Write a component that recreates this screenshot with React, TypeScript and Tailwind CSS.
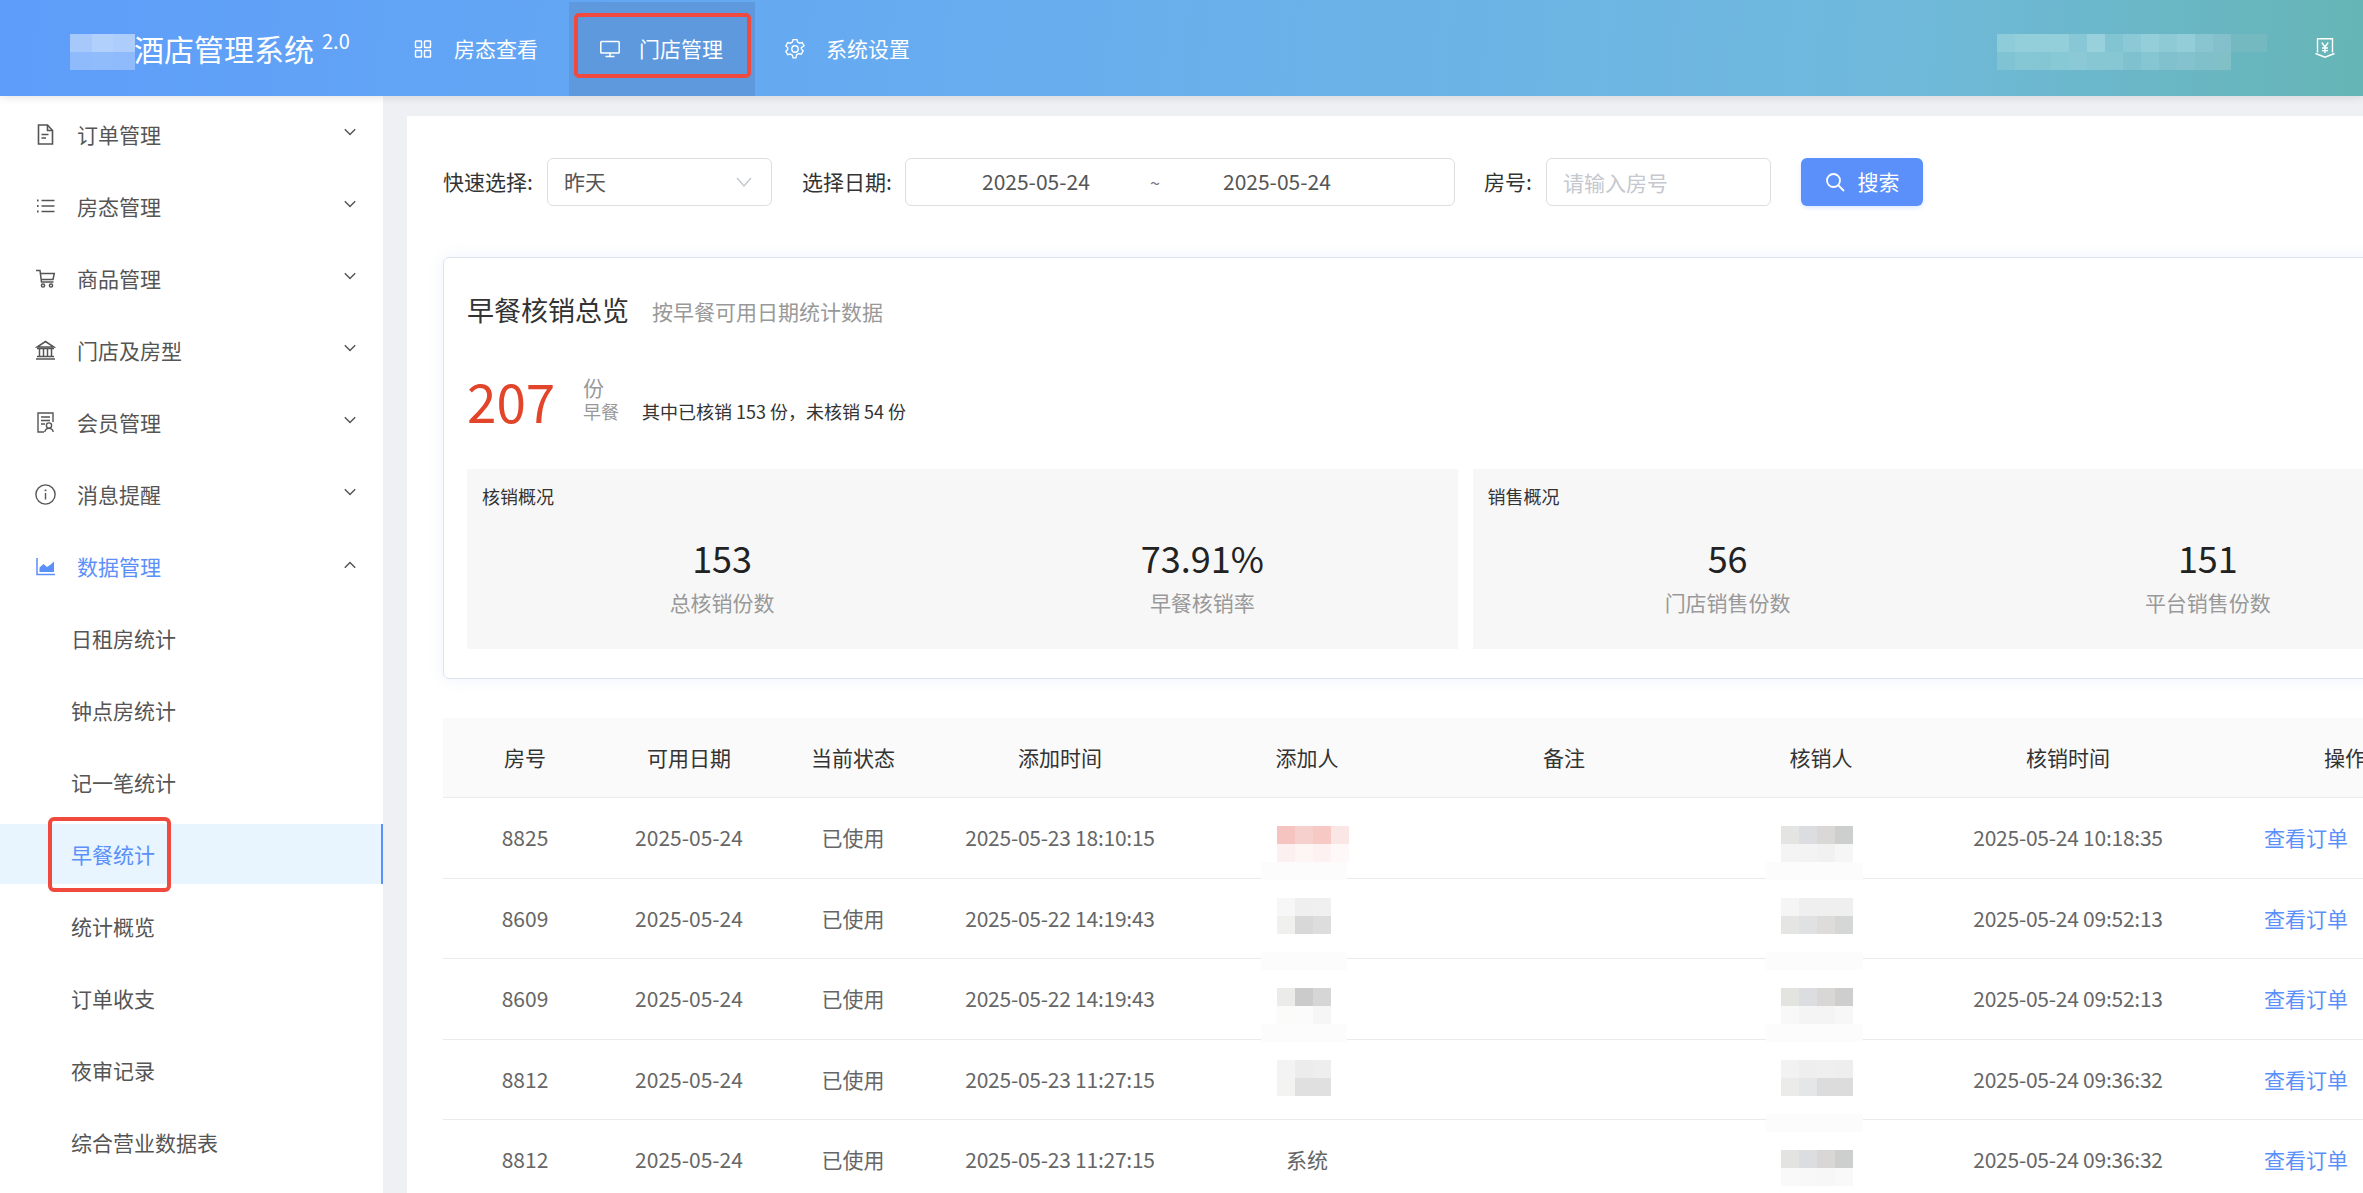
import React from "react";

const ICON = "fill-none stroke-current";

const DocIcon = () => (
  <svg width="21" height="21" viewBox="0 0 21 21" className={ICON} strokeWidth="1.6">
    <path d="M3.5 1h9l5 5.5V20h-14z" />
    <path d="M12.5 1v5.5h5" />
    <path d="M6.5 10.5h7M6.5 14h4.5" />
  </svg>
);
const ListIcon = () => (
  <svg width="21" height="21" viewBox="0 0 21 21" className={ICON} strokeWidth="1.4">
    <path d="M6.5 4.5h13M6.5 10h13M6.5 15.5h13" />
    <path d="M2 4.5h1.6M2 10h1.6M2 15.5h1.6" strokeWidth="2" />
  </svg>
);
const CartIcon = () => (
  <svg width="21" height="21" viewBox="0 0 21 21" className={ICON} strokeWidth="1.5">
    <path d="M1 2.5h4l1.5 11.5h12" />
    <path d="M5.3 5.5h14l-1.3 6H6.2" />
    <circle cx="8" cy="17.5" r="1.6" />
    <circle cx="16" cy="17.5" r="1.6" />
  </svg>
);
const BankIcon = () => (
  <svg width="21" height="21" viewBox="0 0 21 21" className={ICON} strokeWidth="1.5">
    <path d="M10.5 1.5 2 7h17z" />
    <path d="M2 8.5h17M4.5 9v7M8.5 9v7M12.5 9v7M16.5 9v7" />
    <path d="M2 16.5h17M1 19h19" />
  </svg>
);
const MemberIcon = () => (
  <svg width="21" height="21" viewBox="0 0 21 21" className={ICON} strokeWidth="1.4">
    <path d="M9 20H3V1h15v9" />
    <path d="M6 5h9M6 8.5h9M6 12h4" />
    <circle cx="14" cy="13.5" r="2.6" />
    <path d="M9.8 20c.4-2.6 2-3.6 4.2-3.6s3.8 1 4.2 3.6" />
  </svg>
);
const InfoIcon = () => (
  <svg width="21" height="21" viewBox="0 0 21 21" className={ICON} strokeWidth="1.4">
    <circle cx="10.5" cy="10.5" r="9.6" />
    <path d="M10.5 9v6.5" />
    <path d="M10.5 5.6v1.6" strokeWidth="1.8" />
  </svg>
);
const ChartIcon = () => (
  <svg width="21" height="21" viewBox="0 0 21 21" className="stroke-current fill-none" strokeWidth="1.5">
    <path d="M2 2v16.5h18" />
    <path d="M4.5 16V11.5L8.5 8l3.5 3 3-2 4-3.5V16z" fill="currentColor" stroke="none" />
  </svg>
);

const GridIcon = () => (
  <svg width="20" height="20" viewBox="0 0 20 20" className={ICON} strokeWidth="1.4">
    <rect x="2.5" y="2" width="6" height="6.5" rx="0.6" />
    <rect x="11.5" y="2" width="6" height="6.5" rx="0.6" />
    <rect x="2.5" y="11.5" width="6" height="6.5" rx="0.6" />
    <rect x="11.5" y="11.5" width="6" height="6.5" rx="0.6" />
  </svg>
);
const MonitorIcon = () => (
  <svg width="20" height="20" viewBox="0 0 20 20" className={ICON} strokeWidth="1.5">
    <rect x="0.8" y="2.5" width="18.4" height="11.5" rx="0.8" />
    <path d="M10 14v3.5M5.5 17.5h9" />
  </svg>
);
const GearIcon = () => (
  <svg width="20" height="20" viewBox="0 0 20 20" className={ICON} strokeWidth="1.4">
    <path d="M8 1h4l.7 2.6 2.2 1.2 2.6-.7 2 3.5L16.6 9.500v1.400l1.900 1.900-2 3.500-2.600-.7-2.200 1.200L11 20H8l-.7-2.700-2.200-1.200-2.600.7-2-3.500 1.900-1.900V9.500L.5 7.600l2-3.500 2.600.7 2.200-1.200z" transform="translate(.4 -.4) scale(.96)" />
    <circle cx="10" cy="10" r="3.200" />
  </svg>
);
const YenIcon = () => (
  <svg width="20" height="20" viewBox="0 0 20 20" className={ICON} strokeWidth="1.4">
    <path d="M2.500 14.500V.8h15v13.700" />
    <path d="M.5 15.500 10 19.200l9.500-3.700" />
    <path d="M6.800 4.500 10 9l3.200-4.500M10 9v6M7 10h6M7 12.600h6" />
  </svg>
);
const SearchIcon = () => (
  <svg width="20" height="20" viewBox="0 0 20 20" className={ICON} strokeWidth="1.800">
    <circle cx="8.500" cy="8.500" r="6.500" />
    <path d="m13.500 13.500 5.500 5.500" />
  </svg>
);

const Chevron = ({ up }: { up?: boolean }) => (
  <svg width="12" height="8" viewBox="0 0 12 8" className="fill-none stroke-current" strokeWidth="1.500">
    <path d={up ? "M.8 6.800 6 1.500l5.200 5.300" : "M.8 1.200 6 6.500l5.200-5.300"} />
  </svg>
);

const menuTop = [
  { label: "订单管理", icon: <DocIcon /> },
  { label: "房态管理", icon: <ListIcon /> },
  { label: "商品管理", icon: <CartIcon /> },
  { label: "门店及房型", icon: <BankIcon /> },
  { label: "会员管理", icon: <MemberIcon /> },
  { label: "消息提醒", icon: <InfoIcon /> },
];
const subMenu = ["日租房统计", "钟点房统计", "记一笔统计", "早餐统计", "统计概览", "订单收支", "夜审记录", "综合营业数据表"];

const columns = ["房号", "可用日期", "当前状态", "添加时间", "添加人", "备注", "核销人", "核销时间"];
const rows = [
  ["8825", "2025-05-24", "已使用", "2025-05-23 18:10:15", "", "", "", "2025-05-24 10:18:35"],
  ["8609", "2025-05-24", "已使用", "2025-05-22 14:19:43", "", "", "", "2025-05-24 09:52:13"],
  ["8609", "2025-05-24", "已使用", "2025-05-22 14:19:43", "", "", "", "2025-05-24 09:52:13"],
  ["8812", "2025-05-24", "已使用", "2025-05-23 11:27:15", "", "", "", "2025-05-24 09:36:32"],
  ["8812", "2025-05-24", "已使用", "2025-05-23 11:27:15", "系统", "", "", "2025-05-24 09:36:32"],
];
const GRID = "grid grid-cols-[164px_164px_164px_250px_244px_270px_244px_250px_226px_68px]";

type Block = { x: number; y: number; w?: number; h?: number; rows: string[][] };
const F = "#fcfcfc";
const mosaics: Block[] = [
  { x: 70, y: 34, w: 21.67, rows: [["#a6c8fb", "#b2d0fc", "#adcdfc"], ["#8fbafb", "#91bcfb", "#8fbafb"]] },
  {
    x: 1997, y: 34,
    rows: [
      ["#8fccda", "#93cedb", "#93cedb", "#93cedb", "#88c8d6", "#98d1dc", "#82c4d2", "#8cc9d6", "#93ced9", "#8dcad6", "#93cdd8", "#89c5d1", "#83c0cb", "#75b9c0", "#75b9c0"],
      ["#80c3d3", "#85c7d5", "#84c6d4", "#88c9d6", "#8cc9d6", "#87c6d3", "#87c6d3", "#7fc1ce", "#86c6d3", "#80c1cd", "#84c2cd", "#80c0cb", "#82c0c8"],
    ],
  },
  { x: 1261, y: 862, w: 86, h: 18, rows: [[F]] },
  { x: 1261, y: 952, w: 86, h: 18, rows: [[F]] },
  { x: 1261, y: 1024, w: 86, h: 18, rows: [[F]] },
  { x: 1766, y: 862, w: 97, h: 18, rows: [[F]] },
  { x: 1766, y: 952, w: 97, h: 18, rows: [[F]] },
  { x: 1766, y: 1024, w: 97, h: 18, rows: [[F]] },
  { x: 1766, y: 1114, w: 97, h: 18, rows: [[F]] },
  { x: 1277, y: 826, rows: [["#f5c4c0", "#f6d0cc", "#f6c9c5", "#fae6e4"], ["#fdf0f0", "#fef5f5", "#fdf1f1", "#fef8f8"]] },
  { x: 1277, y: 898, rows: [["#f7f7f7", "#efefef", "#f0f0f0"], ["#f0f0ee", "#d8d8d8", "#dddddd"]] },
  { x: 1277, y: 988, rows: [["#ebebe9", "#cbcbcb", "#d6d6d6"], ["#fbfbfa", "#fbfbfb", "#f6f6f6"]] },
  { x: 1277, y: 1060, rows: [["#f3f3f3", "#ececec", "#eeeeee"], ["#f3f3f2", "#e0e0e0", "#e0e0e0"]] },
  { x: 1781, y: 826, rows: [["#e4e4e2", "#dcdde0", "#d9d8d6", "#cdcfce"], ["#f4f4f4", "#f3f3f3", "#f1f1f1", "#f6f6f6"]] },
  { x: 1781, y: 898, rows: [["#f5f5f5", "#efefef", "#efefef", "#efefef"], ["#e5e5e3", "#e0e1e3", "#dddcda", "#d5d6d6"]] },
  { x: 1781, y: 988, rows: [["#e3e4e0", "#dcdde0", "#d8d7d5", "#cdcecd"], ["#f8f8f8", "#f4f4f4", "#f4f4f4", "#f7f7f7"]] },
  { x: 1781, y: 1060, rows: [["#f2f2f2", "#eeeeee", "#efefef", "#eeeeee"], ["#ebebe9", "#e5e6e8", "#dcdcdc", "#dcdcdc"]] },
  { x: 1781, y: 1150, rows: [["#e3e3e1", "#dcdde0", "#d8d7d5", "#cdcfce"], ["#f9f9f9", "#f8f8f8", "#f7f7f7", "#f9f9f9"]] },
];

const Redactions = () => (
  <svg width="2363" height="1193" viewBox="0 0 2363 1193" className="absolute left-0 top-0 z-20 pointer-events-none" shapeRendering="crispEdges">
    {mosaics.flatMap((m, i) =>
      m.rows.flatMap((r, ri) =>
        r.map((c, ci) => (
          <rect key={`${i}-${ri}-${ci}`} x={m.x + ci * (m.w ?? 18)} y={m.y + ri * (m.h ?? 18)} width={m.w ?? 18} height={m.h ?? 18} fill={c} />
        ))
      )
    )}
  </svg>
);

const Stat = ({ value, label }: { value: string; label: string }) => (
  <div className="flex flex-col items-center">
    <div className="text-[36px] leading-[48px] text-[#222]">{value}</div>
    <div className="mt-[6px] text-[21px] leading-[30px] text-[#999]">{label}</div>
  </div>
);

const Panel = ({ title, items }: { title: string; items: [string, string][] }) => (
  <div className="h-[180px] w-[991px] bg-[#f7f7f7] px-[15px] pt-[12px]">
    <div className="text-[18px] leading-[30px] text-[#333]">{title}</div>
    <div className="mt-[22px] grid grid-cols-2">
      {items.map(([v, l]) => (
        <Stat key={l} value={v} label={l} />
      ))}
    </div>
  </div>
);

export default function App() {
  return (
    <div className="relative flex h-screen w-full flex-col overflow-hidden bg-[#eff0f4] font-['Noto_Sans_CJK_SC',sans-serif] text-[21px]">
      <header className="relative z-10 flex h-[96px] shrink-0 items-stretch bg-[linear-gradient(95deg,#5e9dfa_0%,#68aeee_45%,#70b9dc_80%,#66b5b5_100%)] text-white shadow-[0_2px_8px_rgba(0,0,0,0.1)]">
        <div className="flex w-[383px] shrink-0 items-center pl-[134px]">
          <span className="whitespace-nowrap text-[30px] leading-[40px]">酒店管理系统</span>
          <span className="mb-[14px] ml-[8px] text-[20px] leading-[24px]">2.0</span>
        </div>
        <nav className="flex">
          <div className="mt-[2px] flex w-[186px] items-center gap-[21px] pl-[30px]">
            <GridIcon />
            <span className="whitespace-nowrap">房态查看</span>
          </div>
          <div className="mt-[2px] flex w-[186px] items-center gap-[19px] bg-[#5e98dd] pl-[31px]">
            <MonitorIcon />
            <span className="whitespace-nowrap">门店管理</span>
          </div>
          <div className="mt-[2px] flex w-[186px] items-center gap-[21px] pl-[30px]">
            <GearIcon />
            <span className="whitespace-nowrap">系统设置</span>
          </div>
        </nav>
        <div className="ml-auto flex items-center pr-[28px]">
          <YenIcon />
        </div>
      </header>

      <div className="flex min-h-0 flex-1">
        <aside className="w-[383px] shrink-0 overflow-hidden bg-white pt-[8px] text-[#555]">
          {menuTop.map((m) => (
            <div key={m.label} className="mb-[12px] flex h-[60px] items-center pl-[35px] pr-[27px]">
              {m.icon}
              <span className="ml-[21px] mt-[2px]">{m.label}</span>
              <span className="mb-[5px] ml-auto flex">
                <Chevron />
              </span>
            </div>
          ))}
          <div className="mb-[12px] flex h-[60px] items-center pl-[35px] pr-[27px] text-[#5b8ff9]">
            <ChartIcon />
            <span className="ml-[21px] mt-[2px]">数据管理</span>
            <span className="mb-[2px] ml-auto flex text-[#555]">
              <Chevron up />
            </span>
          </div>
          {subMenu.map((s) =>
            s === "早餐统计" ? (
              <div key={s} className="mb-[12px] flex h-[60px] items-center border-r-2 border-[#5b8ff9] bg-[#e8f5fe] pl-[71px] pt-[2px] text-[#5b8ff9]">
                {s}
              </div>
            ) : (
              <div key={s} className="mb-[12px] flex h-[60px] items-center pl-[71px] pt-[2px]">
                {s}
              </div>
            )
          )}
        </aside>

        <main className="min-w-0 flex-1 overflow-hidden pl-[24px] pt-[20px]">
          <div className="h-full w-[2116px] bg-white pl-[36px] pt-[42px]">
            <div className="flex h-[48px] items-center text-[#333]">
              <div className="w-[104px] whitespace-nowrap">快速选择:</div>
              <div className="flex h-[48px] w-[225px] items-center justify-between rounded-[6px] border border-[#dcdee2] pl-[16px] pr-[19px] text-[#555]">
                <span>昨天</span>
                <svg width="16" height="10" viewBox="0 0 16 10" className="fill-none stroke-[#c0c4cc]" strokeWidth="1.200">
                  <path d="M1 1l7 8 7-8" />
                </svg>
              </div>
              <div className="ml-[30px] w-[103px] whitespace-nowrap">选择日期:</div>
              <div className="flex h-[48px] w-[550px] items-center gap-[60px] rounded-[6px] border border-[#dcdee2] pl-[76px] text-[#555]">
                <span className="w-[108px] whitespace-nowrap">2025-05-24</span>
                <span className="w-[13px] text-[18px] text-[#777]">~</span>
                <span className="w-[108px] whitespace-nowrap">2025-05-24</span>
              </div>
              <div className="ml-[29px] w-[62px] whitespace-nowrap">房号:</div>
              <input
                placeholder="请输入房号"
                className="h-[48px] w-[225px] rounded-[6px] border border-[#dcdee2] pl-[16px] outline-none placeholder:text-[#c5c8ce]"
              />
              <div className="ml-[30px] flex h-[48px] w-[122px] items-center justify-center gap-[13px] rounded-[6px] bg-[#5b8ff9] text-white shadow-[0_2px_4px_rgba(91,143,249,0.2)]">
                <SearchIcon />
                <span>搜索</span>
              </div>
            </div>

            <section className="mt-[51px] h-[422px] w-[2044px] rounded-[6px] border border-[#dfe3ee] px-[23px] pt-[32px] shadow-[0_0_16px_rgba(120,150,230,0.12)]">
              <div className="flex h-[40px] items-center">
                <h2 className="text-[27px] leading-[40px] text-[#333]">早餐核销总览</h2>
                <span className="ml-[23px] mt-[3px] text-[21px] text-[#999]">按早餐可用日期统计数据</span>
              </div>
              <div className="mt-[33px] flex h-[76px] items-center">
                <div className="mb-[3px] w-[116px] text-[53px] leading-[76px] text-[#e2452a]">207</div>
                <div className="mb-[4px] flex flex-col">
                  <div className="text-[21px] leading-[24px] text-[#999]">份</div>
                  <div className="flex items-center leading-[24px]">
                    <span className="text-[18px] text-[#999]">早餐</span>
                    <span className="ml-[23px] text-[18px] text-[#333]">其中已核销 153 份，未核销 54 份</span>
                  </div>
                </div>
              </div>
              <div className="mt-[30px] flex gap-[15px]">
                <Panel title="核销概况" items={[["153", "总核销份数"], ["73.91%", "早餐核销率"]]} />
                <Panel title="销售概况" items={[["56", "门店销售份数"], ["151", "平台销售份数"]]} />
              </div>
            </section>

            <div className="mt-[39px] w-[2044px]">
              <div className={`${GRID} h-[80px] items-center border-b border-[#e8eaec] bg-[#fafafa] text-[#333]`}>
                {columns.map((c) => (
                  <div key={c} className="text-center">{c}</div>
                ))}
                <div className="whitespace-nowrap pl-[131px]">操作</div>
              </div>
              {rows.map((r, i) => (
                <div key={i} className={`${GRID} h-[80.5px] items-center border-b border-[#e8eaec] text-[#666]`}>
                  {r.map((c, j) => (
                    <div key={j} className={j === 3 || j === 7 ? "whitespace-nowrap text-center tracking-[-0.25px]" : "whitespace-nowrap text-center"}>{c}</div>
                  ))}
                  <div className="text-center text-[#5b8ff9]">查看订单</div>
                </div>
              ))}
            </div>
          </div>
        </main>
      </div>

      <Redactions />
      <div className="pointer-events-none absolute left-[574px] top-[13px] z-30 h-[65px] w-[177px] rounded-[5px] border-[4px] border-[#f0493e]" />
      <div className="pointer-events-none absolute left-[48px] top-[817px] z-30 h-[75px] w-[123px] rounded-[6px] border-[4px] border-[#f0493e]" />
    </div>
  );
}
